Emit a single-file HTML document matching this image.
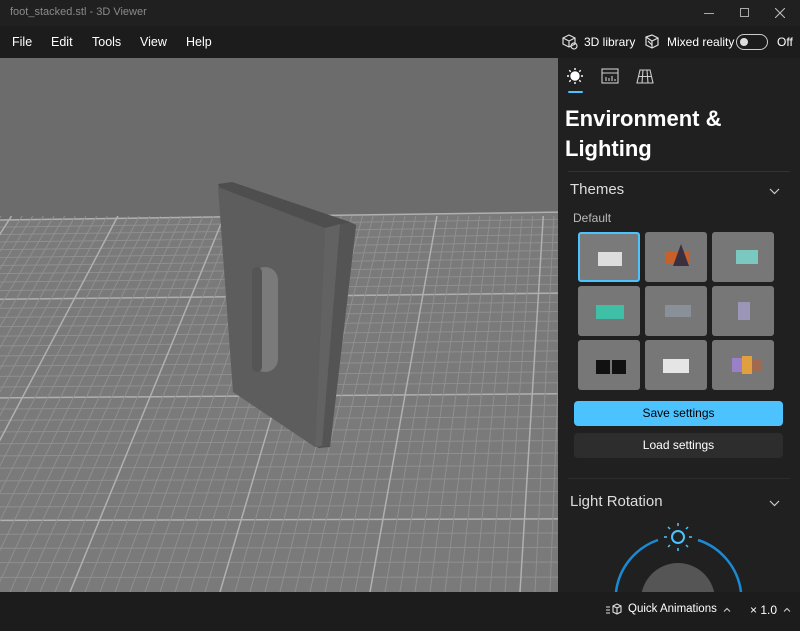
<!DOCTYPE html>
<html><head><meta charset="utf-8"><style>
*{margin:0;padding:0;box-sizing:border-box}
body{width:800px;height:631px;overflow:hidden;background:#202020;font-family:"Segoe UI","Liberation Sans",sans-serif;color:#fff;position:relative}
.abs{position:absolute}
.t{font-size:12.5px}
</style></head><body>
<div class="abs" style="left:0;top:0;width:800px;height:26px;background:#202020"></div>
<div class="abs" style="left:10px;top:6px;font-size:11px;color:#8a8a8a">foot_stacked.stl - 3D Viewer</div>
<div class="abs" style="left:704px;top:13px;width:10px;height:1px;background:#aaa"></div>
<div class="abs" style="left:740px;top:8px;width:9px;height:9px;border:1px solid #aaa"></div>
<svg class="abs" style="left:775px;top:8px" width="10" height="10" viewBox="0 0 10 10" stroke="#bbb" stroke-width="1.1"><path d="M0 0L10 10M10 0L0 10"/></svg>
<div class="abs" style="left:0;top:26px;width:800px;height:32px;background:#1c1c1c"></div>
<div class="abs t" style="left:12px;top:35px">File</div>
<div class="abs t" style="left:51px;top:35px">Edit</div>
<div class="abs t" style="left:92px;top:35px">Tools</div>
<div class="abs t" style="left:140px;top:35px">View</div>
<div class="abs t" style="left:186px;top:35px">Help</div>
<svg class="abs" style="left:561px;top:33px" width="18" height="18" viewBox="0 0 18 18" fill="none" stroke="#ddd" stroke-width="1.2"><path d="M2 5l6-3 6 3v6l-6 3-6-3z M2 5l6 3 6-3 M8 8v6"/><circle cx="13" cy="13" r="3"/></svg>
<div class="abs" style="left:584px;top:35px;font-size:12px">3D library</div>
<svg class="abs" style="left:644px;top:33px" width="18" height="18" viewBox="0 0 18 18" fill="none" stroke="#ddd" stroke-width="1.2"><path d="M2 4l6-2 6 3v7l-6 3-6-3z M2 4l6 4 6-3 M8 8v7 M4 8l4 4"/></svg>
<div class="abs" style="left:667px;top:35px;font-size:12px">Mixed reality</div>
<div class="abs" style="left:736px;top:34px;width:32px;height:16px;border:1px solid #ccc;border-radius:8px"></div>
<div class="abs" style="left:740px;top:38px;width:8px;height:8px;background:#ddd;border-radius:50%"></div>
<div class="abs" style="left:777px;top:35px;font-size:12px">Off</div>

<svg class="abs" style="left:0;top:58px" width="558" height="534" viewBox="0 58 558 534">
<rect x="0" y="58" width="558" height="534" fill="#6c6c6c"/>
<polygon points="0,220 558,212 558,592 0,592" fill="#7a7a7a"/>
<g id="grid" stroke="#999"></g>
<polygon points="218,184 232,182 350,222 356,225 330,447 318,448" fill="#4e4e4e"/>
<polygon points="218,187 325,228 315,447 233,392" fill="#5d5d5d"/>
<polygon points="325,228 350,222 356,226 330,446 315,447" fill="#545454"/>
<polygon points="325,228 340,224 322,446 315,447" fill="#626262"/>
<rect x="252" y="267" width="26" height="105" rx="13" fill="#7a7a7a"/>
<rect x="252" y="267" width="10" height="105" rx="5" fill="#555"/>
</svg>
<script>
(function(){var g=document.getElementById('grid'),s='';var y=220,i=0;
while(y<592){var m=(i%10==0);s+='<line x1="0" y1="'+y+'" x2="558" y2="'+(y-8*(1-(y-212)/380))+'" stroke="'+(m?'#b0b0b0':'#8f8f8f')+'" stroke-width="'+(m?1.5:1)+'"/>';y+=7+(y-212)*0.022;i++;}
var vx=600,vy=-700;for(var k=-80;k<50;k++){var bx=70+k*15;var y0=216;var t=(y0-vy)/(592-vy);var tx=vx+(bx-vx)*t;var m=((k%10)+10)%10==0;s+='<line x1="'+tx+'" y1="'+y0+'" x2="'+bx+'" y2="592" stroke="'+(m?'#b0b0b0':'#8f8f8f')+'" stroke-width="'+(m?1.5:1)+'"/>';}
g.innerHTML=s;})();
</script>

<div class="abs" style="left:558px;top:58px;width:242px;height:534px;background:#202020"></div>
<svg class="abs" style="left:566px;top:67px" width="18" height="18" viewBox="0 0 18 18" stroke="#fff" stroke-width="1.4" fill="none"><circle cx="9" cy="9" r="4" fill="#fff"/><path d="M9 1v2M9 15v2M1 9h2M15 9h2M3.3 3.3l1.4 1.4M13.3 13.3l1.4 1.4M3.3 14.7l1.4-1.4M13.3 4.7l1.4-1.4"/></svg>
<div class="abs" style="left:568px;top:91px;width:15px;height:2px;background:#4cc2ff;border-radius:1px"></div>
<svg class="abs" style="left:601px;top:68px" width="18" height="16" viewBox="0 0 18 16" stroke="#ccc" stroke-width="1.1" fill="none"><rect x="1" y="1" width="16" height="14"/><path d="M1 5h16M5 13v-4M8 13v-3M11 13v-5M14 13v-2"/></svg>
<svg class="abs" style="left:636px;top:68px" width="18" height="16" viewBox="0 0 18 16" stroke="#ccc" stroke-width="1.1" fill="none"><path d="M4 2h10l3 13H1z M2.5 8.5h13 M7 2l-1 13 M11 2l1 13"/></svg>
<div class="abs" style="left:565px;top:104px;font-size:22px;font-weight:bold;line-height:30px">Environment &amp;<br>Lighting</div>
<div class="abs" style="left:568px;top:171px;width:222px;height:1px;background:#333"></div>
<div class="abs" style="left:570px;top:181px;font-size:15px;color:#ddd">Themes</div>
<svg class="abs" style="left:769px;top:188px" width="11" height="7" viewBox="0 0 11 7" stroke="#ccc" stroke-width="1.2" fill="none"><path d="M1 1l4.5 4.5L10 1"/></svg>
<div class="abs" style="left:573px;top:211px;font-size:12px;color:#bbb">Default</div>
<div class="abs" style="left:578px;top:232px">
<div style="display:grid;grid-template-columns:62px 62px 62px;grid-template-rows:50px 50px 50px;gap:4px 5px">
<div style="background:#7a7a7a;border:2px solid #4cc2ff;border-radius:3px;position:relative"><div class="abs" style="left:18px;top:18px;width:24px;height:14px;background:#ddd"></div></div>
<div style="background:#777;border-radius:3px;position:relative"><div class="abs" style="left:20px;top:20px;width:24px;height:12px;background:#c8602a"></div><div class="abs" style="left:28px;top:12px;width:0;height:0;border-left:8px solid transparent;border-right:8px solid transparent;border-bottom:22px solid #3a3040"></div></div>
<div style="background:#777;border-radius:3px;position:relative"><div class="abs" style="left:24px;top:18px;width:22px;height:14px;background:#7ac8c0"></div></div>
<div style="background:#777;border-radius:3px;position:relative"><div class="abs" style="left:18px;top:19px;width:28px;height:14px;background:#3ebfa6"></div></div>
<div style="background:#777;border-radius:3px;position:relative"><div class="abs" style="left:20px;top:19px;width:26px;height:12px;background:#8a9098"></div></div>
<div style="background:#777;border-radius:3px;position:relative"><div class="abs" style="left:26px;top:16px;width:12px;height:18px;background:#9b95b8"></div></div>
<div style="background:#777;border-radius:3px;position:relative"><div class="abs" style="left:18px;top:20px;width:14px;height:14px;background:#111"></div><div class="abs" style="left:34px;top:20px;width:14px;height:14px;background:#111"></div></div>
<div style="background:#777;border-radius:3px;position:relative"><div class="abs" style="left:18px;top:19px;width:26px;height:14px;background:#e5e5e5"></div></div>
<div style="background:#777;border-radius:3px;position:relative"><div class="abs" style="left:20px;top:18px;width:12px;height:14px;background:#9a80c8"></div><div class="abs" style="left:30px;top:16px;width:10px;height:18px;background:#e0a040"></div><div class="abs" style="left:40px;top:20px;width:10px;height:12px;background:#a06a50"></div></div>
</div></div>
<div class="abs" style="left:574px;top:401px;width:209px;height:25px;background:#4cc2ff;border-radius:4px;color:#000;font-size:12px;text-align:center;line-height:25px">Save settings</div>
<div class="abs" style="left:574px;top:433px;width:209px;height:25px;background:#2d2d2d;border-radius:4px;color:#fff;font-size:12px;text-align:center;line-height:25px">Load settings</div>
<div class="abs" style="left:568px;top:478px;width:222px;height:1px;background:#2c2c2c"></div>
<div class="abs" style="left:570px;top:493px;font-size:15px;color:#ddd">Light Rotation</div>
<svg class="abs" style="left:769px;top:500px" width="11" height="7" viewBox="0 0 11 7" stroke="#ccc" stroke-width="1.2" fill="none"><path d="M1 1l4.5 4.5L10 1"/></svg>
<svg class="abs" style="left:558px;top:520px" width="242" height="72" viewBox="0 0 242 72">
<path d="M58 72 A63 63 0 0 1 100 20" stroke="#1a8ad4" stroke-width="2.5" fill="none"/>
<path d="M140 20 A63 63 0 0 1 183 72" stroke="#1a8ad4" stroke-width="2.5" fill="none"/>
<circle cx="120" cy="80" r="37" fill="#555"/>
<circle cx="120" cy="17" r="6" stroke="#4cc2ff" stroke-width="2" fill="none"/>
<path d="M120 3v3M120 28v3M106 17h3M131 17h3M110 7l2 2M128 25l2 2M110 27l2-2M128 9l2-2" stroke="#4cc2ff" stroke-width="1.5"/>
</svg>
<div class="abs" style="left:0;top:592px;width:800px;height:39px;background:#1c1c1c"></div>
<svg class="abs" style="left:605px;top:603px" width="18" height="14" viewBox="0 0 18 14" stroke="#ddd" stroke-width="1.1" fill="none"><path d="M1 4h4M1 7h4M1 10h4M8 3l4-2 4 2v6l-4 2-4-2z M8 3l4 2 4-2 M12 5v6"/></svg>
<div class="abs" style="left:628px;top:603px;font-size:11.5px">Quick Animations</div>
<svg class="abs" style="left:723px;top:607px" width="8" height="5" viewBox="0 0 8 5" stroke="#ccc" stroke-width="1.1" fill="none"><path d="M1 4.5L4 1.5L7 4.5"/></svg>
<div class="abs" style="left:750px;top:603px;font-size:12px">× 1.0</div>
<svg class="abs" style="left:783px;top:607px" width="8" height="5" viewBox="0 0 8 5" stroke="#ccc" stroke-width="1.1" fill="none"><path d="M1 4.5L4 1.5L7 4.5"/></svg>
</body></html>
